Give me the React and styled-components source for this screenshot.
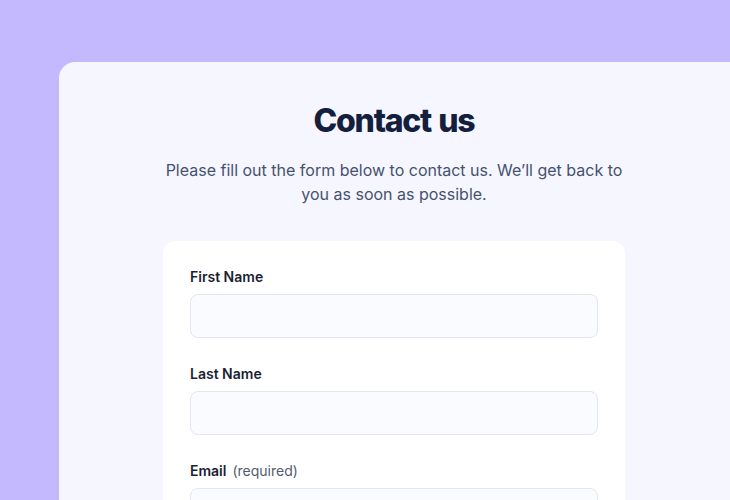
import styled, { createGlobalStyle } from "styled-components";

const GlobalStyle = createGlobalStyle`
  html, body {
    margin: 0;
    padding: 0;
    background: #c4b9fe;
    overflow: hidden;
    font-family: Inter, "Noto Sans", sans-serif;
  }
`

const Page = styled.div`
  width: 730px;
  height: 500px;
  padding: 62px 0 0 59px;
  box-sizing: border-box;
  overflow: hidden;
`

const Panel = styled.section`
  width: 700px;
  min-height: 500px;
  box-sizing: border-box;
  padding: 39px 30px 0 0;
  background: #f5f6ff;
  border-radius: 16px 0 0 0;
  display: flex;
  flex-direction: column;
  align-items: center;
`

const Title = styled.h1`
  margin: 0;
  font-size: 32px;
  line-height: 40px;
  font-weight: 800;
  letter-spacing: -0.04em;
  word-spacing: 0.05em;
  color: #141f3d;
`

const Intro = styled.p`
  margin: 17px 0 0;
  max-width: 470px;
  text-align: center;
  font-size: 16px;
  line-height: 24px;
  color: #46526b;
`

const Card = styled.form`
  margin-top: 35px;
  width: 462px;
  box-sizing: border-box;
  padding: 26px 27px;
  background: #ffffff;
  border-radius: 12px;
  display: flex;
  flex-direction: column;
  gap: 26px;
`

const Field = styled.div`
  display: flex;
  flex-direction: column;
  gap: 7px;
`

const Label = styled.label`
  font-size: 14px;
  line-height: 20px;
  font-weight: 600;
  color: #1a1f33;

  span {
    font-weight: 400;
    color: #525c70;
    margin-left: 6px;
  }
`

const Input = styled.input`
  height: 44px;
  box-sizing: border-box;
  border: 1.5px solid #e3e6ee;
  border-radius: 8px;
  background: #fafbfe;
  padding: 0 12px;
  font: inherit;
  font-size: 14px;
  outline: none;
`

export default function App() {
  return (
    <>
      <GlobalStyle />
      <Page>
        <Panel>
          <Title>Contact us</Title>
          <Intro>
            Please fill out the form below to contact us. We’ll get back to you as soon as possible.
          </Intro>
          <Card onSubmit={e => e.preventDefault()}>
            <Field>
              <Label htmlFor="first">First Name</Label>
              <Input id="first" type="text" />
            </Field>
            <Field>
              <Label htmlFor="last">Last Name</Label>
              <Input id="last" type="text" />
            </Field>
            <Field>
              <Label htmlFor="email">Email<span>(required)</span></Label>
              <Input id="email" type="email" />
            </Field>
          </Card>
        </Panel>
      </Page>
    </>
  );
}
